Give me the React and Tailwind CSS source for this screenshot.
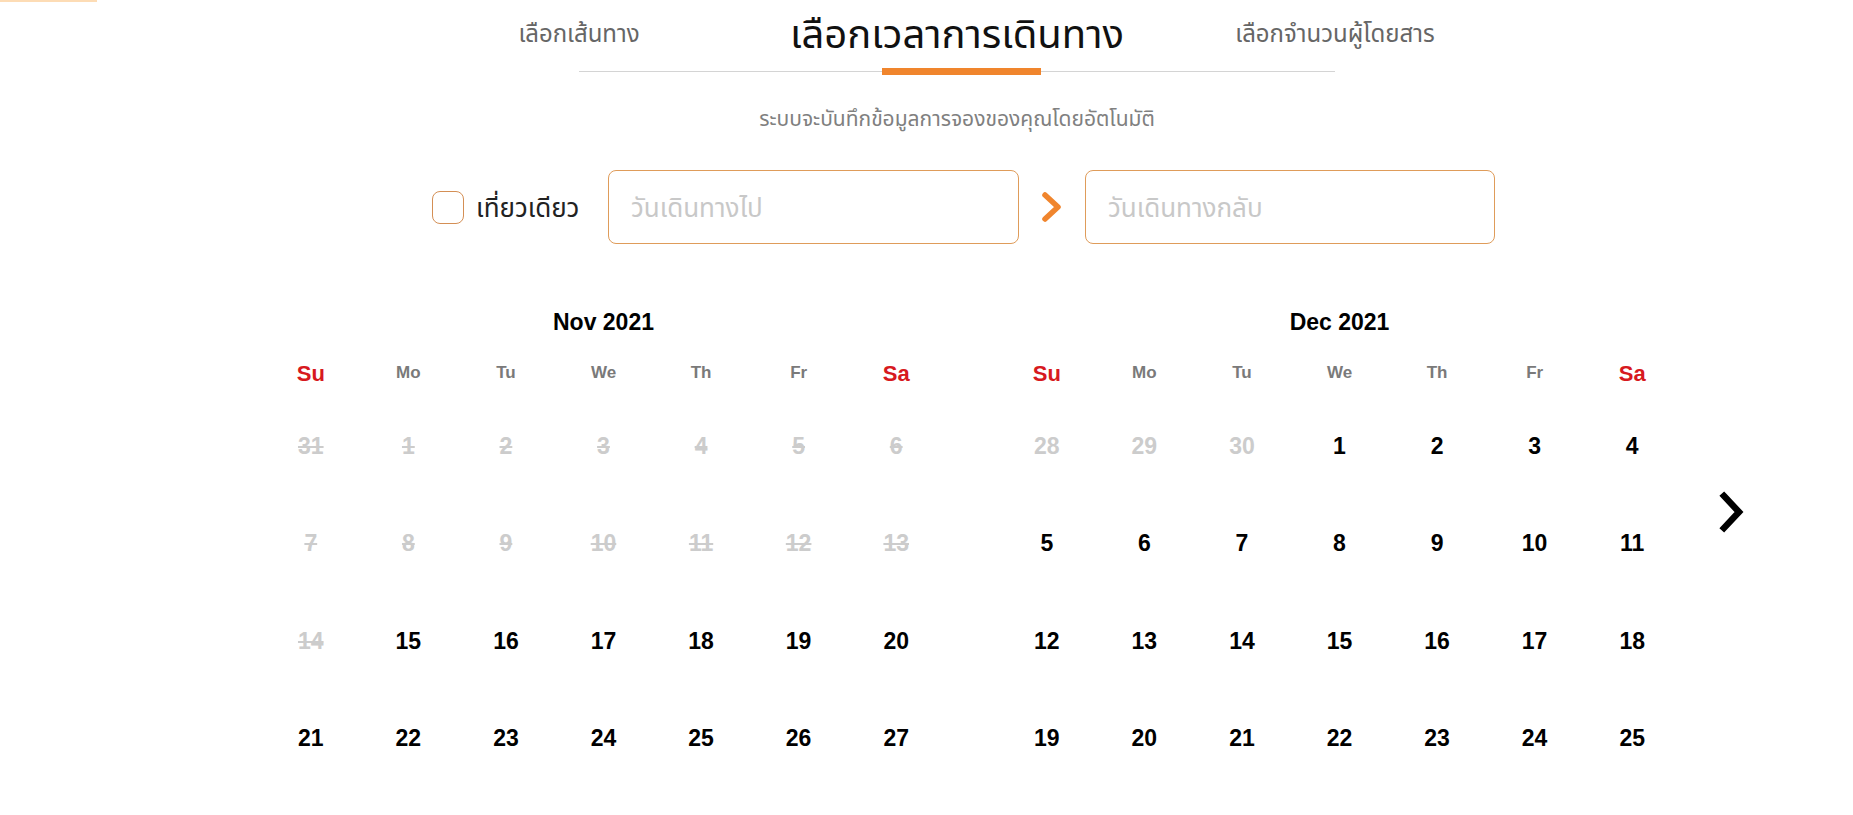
import React from "react";

const thai = { fontFamily: '"Noto Sans Thai", "Noto Sans", "DejaVu Sans", sans-serif' };

const headers = [
  { t: "Su", red: true },
  { t: "Mo" },
  { t: "Tu" },
  { t: "We" },
  { t: "Th" },
  { t: "Fr" },
  { t: "Sa", red: true },
];

// s: struck past, g: grey other month, n: normal
const nov = [
  [[31, "s"], [1, "s"], [2, "s"], [3, "s"], [4, "s"], [5, "s"], [6, "s"]],
  [[7, "s"], [8, "s"], [9, "s"], [10, "s"], [11, "s"], [12, "s"], [13, "s"]],
  [[14, "s"], [15, "n"], [16, "n"], [17, "n"], [18, "n"], [19, "n"], [20, "n"]],
  [[21, "n"], [22, "n"], [23, "n"], [24, "n"], [25, "n"], [26, "n"], [27, "n"]],
];

const dec = [
  [[28, "g"], [29, "g"], [30, "g"], [1, "n"], [2, "n"], [3, "n"], [4, "n"]],
  [[5, "n"], [6, "n"], [7, "n"], [8, "n"], [9, "n"], [10, "n"], [11, "n"]],
  [[12, "n"], [13, "n"], [14, "n"], [15, "n"], [16, "n"], [17, "n"], [18, "n"]],
  [[19, "n"], [20, "n"], [21, "n"], [22, "n"], [23, "n"], [24, "n"], [25, "n"]],
];

function Month({ title, rows }) {
  return (
    <div className="w-[683px] shrink-0" style={{ fontFamily: '"Liberation Sans", Arial, sans-serif' }}>
      <div className="h-[54px] flex items-center justify-center text-[23px] font-bold text-black">
        {title}
      </div>
      <div className="grid grid-cols-7 h-[48px]">
        {headers.map((h) => (
          <div
            key={h.t}
            className={
              h.red
                ? "flex items-center justify-center text-[22px] font-bold text-[#d71920]"
                : "flex items-center justify-center text-[17px] font-bold text-[#7a7a7a]"
            }
          >
            {h.t}
          </div>
        ))}
      </div>
      <div className="grid grid-cols-7 auto-rows-[97.5px]">
        {rows.flat().map(([d, s], i) => (
          <div key={i} className="flex items-center justify-center">
            <span
              className={
                s === "s"
                  ? "text-[23px] font-bold text-[#cccccc] line-through decoration-2"
                  : s === "g"
                  ? "text-[23px] font-bold text-[#cccccc]"
                  : "text-[23px] font-bold text-black"
              }
            >
              {d}
            </span>
          </div>
        ))}
      </div>
    </div>
  );
}

export default function App() {
  return (
    <div className="w-[1853px] h-[815px] overflow-hidden bg-white">
      <div className="h-[2px] w-[97px] bg-[#fddcb5]" />

      {/* stepper */}
      <div className="flex flex-col items-center pl-[61px]" style={thai}>
        <div className="grid grid-cols-3 w-[1134px] h-[69px]">
          <div className="flex items-center justify-center pb-[4px] text-[24px] text-[#666666]">เลือกเส้นทาง</div>
          <div className="flex items-center justify-center pb-[1px] text-[40px] text-[#111111]">เลือกเวลาการเดินทาง</div>
          <div className="flex items-center justify-center pb-[4px] text-[24px] text-[#666666]">เลือกจำนวนผู้โดยสาร</div>
        </div>
        <div className="relative w-[756px] h-px bg-[#d4d4d4]">
          <div className="absolute left-[303px] top-[-3px] w-[159px] h-[7px] bg-[#f0852d]" />
        </div>
        <div className="mt-[33px] text-[21px] text-[#808080] leading-[30px]">ระบบจะบันทึกข้อมูลการจองของคุณโดยอัตโนมัติ</div>
      </div>

      {/* inputs */}
      <div className="flex items-center mt-[35px] pl-[432px] h-[74px]" style={thai}>
        <div className="w-[32px] h-[33px] rounded-[8px] border border-[#d48f55] shrink-0" />
        <div className="ml-[12px] pt-[5px] text-[26px] text-[#222222] w-[132px]">เที่ยวเดียว</div>
        <div className="w-[411px] h-[74px] rounded-[8px] border border-[#df9c5a] flex items-center pl-[22px] pt-[5px] text-[26px] text-[#c8c8c8]">
          วันเดินทางไป
        </div>
        <div className="w-[66px] flex items-center justify-center">
          <svg width="24" height="32" viewBox="0 0 24 32">
            <polyline points="5,4 18,16 5,28" fill="none" stroke="#f0852d" strokeWidth="5.5" strokeLinecap="round" strokeLinejoin="round" />
          </svg>
        </div>
        <div className="w-[410px] h-[74px] rounded-[8px] border border-[#df9c5a] flex items-center pl-[22px] pt-[5px] text-[26px] text-[#c8c8c8]">
          วันเดินทางกลับ
        </div>
      </div>

      {/* calendars */}
      <div className="flex mt-[51px] pl-[262px]">
        <Month title="Nov 2021" rows={nov} />
        <div className="w-[53px] shrink-0" />
        <Month title="Dec 2021" rows={dec} />
        <div className="ml-[37px] pt-[195px]">
          <svg width="28" height="44" viewBox="0 0 28 44">
            <polyline points="6,6 21,22 6,38" fill="none" stroke="#000000" strokeWidth="6.5" strokeLinecap="square" />
          </svg>
        </div>
      </div>
    </div>
  );
}
